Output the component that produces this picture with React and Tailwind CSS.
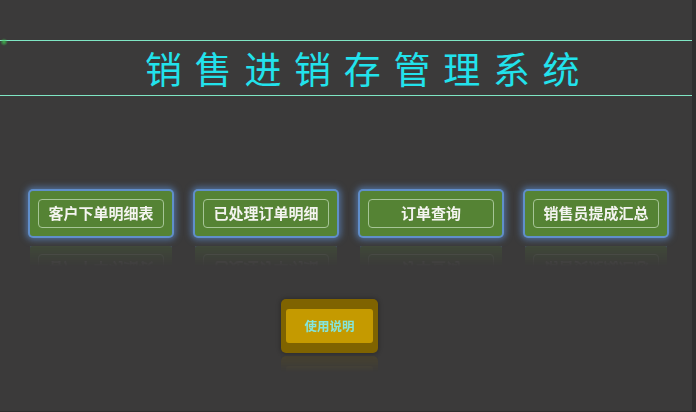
import React from "react";

const items = ["客户下单明细表", "已处理订单明细", "订单查询", "销售员提成汇总"];

export default function App() {
  return (
    <div
      className="w-[696px] h-[412px] bg-[#2f2e2e] flex overflow-hidden"
      style={{ fontFamily: '"Noto Sans CJK SC", "Noto Sans", sans-serif' }}
    >
      <div className="w-[692px] h-[411px] bg-[#3b3a3a] flex flex-col">
        <div className="relative mt-[40px] h-[56px] border-y border-[#7fe6c4] flex items-center pl-[145px]">
          <div className="absolute left-0 top-[-3px] w-[8px] h-[8px] rounded-full bg-[radial-gradient(circle,rgba(60,200,80,0.8),transparent_70%)]" />
          <span className="text-[37px] leading-none tracking-[12.7px] text-[#22e2ec] whitespace-nowrap">
            销售进销存管理系统
          </span>
        </div>

        <div className="mt-[95px] flex gap-[23px] pl-[30px]">
          {items.map((t) => (
            <div
              key={t}
              className="w-[142px] h-[45px] rounded-[3px] bg-[#558334] flex items-center justify-center shadow-[0_0_0_2px_rgba(100,150,215,0.85),0_0_6px_4px_rgba(95,145,215,0.6)] [-webkit-box-reflect:below_10px_linear-gradient(transparent_55%,rgba(255,255,255,0.2))]"
            >
              <div className="w-[126px] h-[29px] rounded-[4px] border border-[#a6c596] flex items-center justify-center text-[15px] font-bold text-[#f4f4f0] whitespace-nowrap">
                {t}
              </div>
            </div>
          ))}
        </div>

        <div className="mt-[63px] flex pl-[281px]">
          <div className="w-[97px] h-[54px] rounded-[5px] bg-[#7f6300] px-[5px] py-[10px] flex shadow-[0_0_4px_1px_rgba(0,0,0,0.25)] [-webkit-box-reflect:below_3px_linear-gradient(transparent_70%,rgba(255,255,255,0.18))]">
            <div className="flex-1 rounded-[3px] bg-[#c59a00] flex items-center justify-center text-[12.5px] font-bold text-[#84e6dc] whitespace-nowrap">
              使用说明
            </div>
          </div>
        </div>
      </div>
    </div>
  );
}
